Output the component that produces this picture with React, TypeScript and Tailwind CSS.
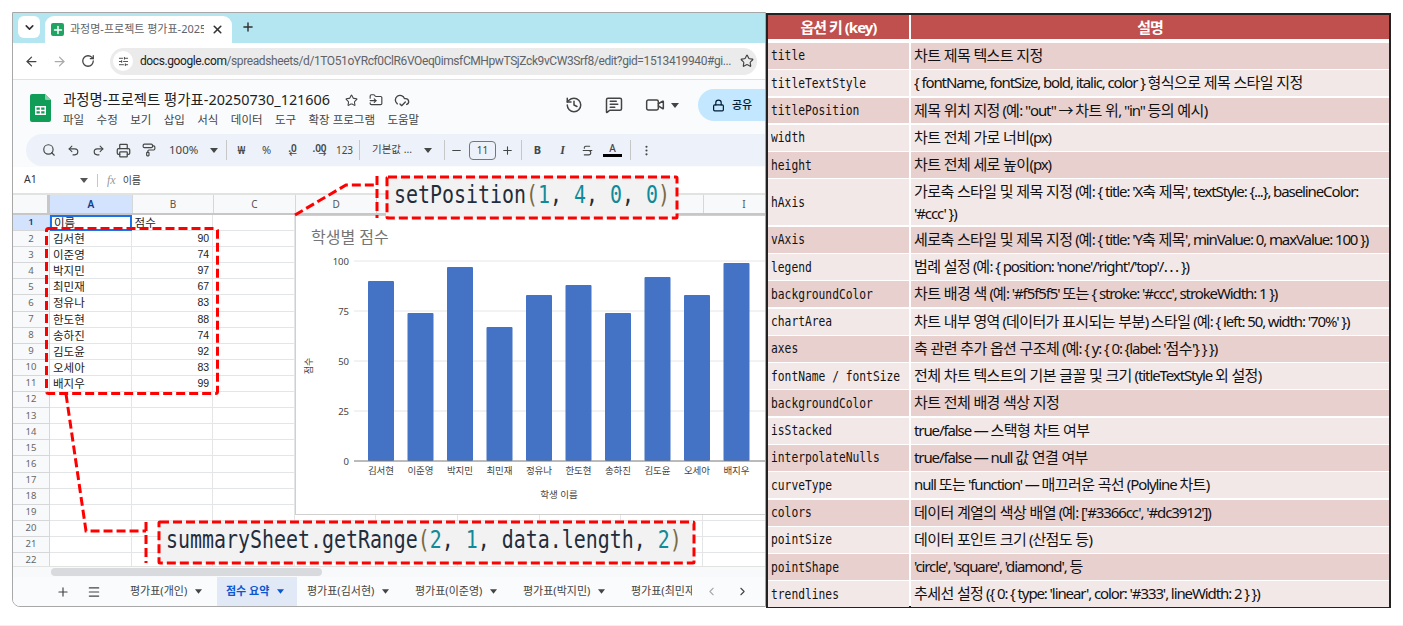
import React from 'react';
import { ArrowLeft, ArrowRight, RotateCw, Star, X, Plus, ChevronDown, ChevronLeft, ChevronRight, Search, Undo2, Redo2, Printer, PaintRoller, Minus, Strikethrough, EllipsisVertical, History, MessageSquareText, Video, Lock, FolderInput, CloudCheck, Menu, SlidersHorizontal } from 'lucide-react';

const sans = 'font-["Noto_Sans","Noto_Sans_CJK_KR",sans-serif]';

const students = [
  ['김서현', 90], ['이준영', 74], ['박지민', 97], ['최민재', 67], ['정유나', 83],
  ['한도현', 88], ['송하진', 74], ['김도윤', 92], ['오세아', 83], ['배지우', 99],
] as const;

const options = [
  ['title', '차트 제목 텍스트 지정'],
  ['titleTextStyle', '{ fontName, fontSize, bold, italic, color } 형식으로 제목 스타일 지정'],
  ['titlePosition', '제목 위치 지정 (예: "out" → 차트 위, "in" 등의 예시)'],
  ['width', '차트 전체 가로 너비(px)'],
  ['height', '차트 전체 세로 높이(px)'],
  ['hAxis', "가로축 스타일 및 제목 지정 (예: { title: 'X축 제목', textStyle: {...}, baselineColor:\n'#ccc' })"],
  ['vAxis', "세로축 스타일 및 제목 지정 (예: { title: 'Y축 제목', minValue: 0, maxValue: 100 })"],
  ['legend', "범례 설정 (예: { position: 'none'/'right'/'top'/⋯ })"],
  ['backgroundColor', "차트 배경 색 (예: '#f5f5f5' 또는 { stroke: '#ccc', strokeWidth: 1 })"],
  ['chartArea', "차트 내부 영역 (데이터가 표시되는 부분) 스타일 (예: { left: 50, width: '70%' })"],
  ['axes', "축 관련 추가 옵션 구조체 (예: { y: { 0: {label: '점수'} } })"],
  ['fontName / fontSize', '전체 차트 텍스트의 기본 글꼴 및 크기 (titleTextStyle 외 설정)'],
  ['backgroundColor', '차트 전체 배경 색상 지정'],
  ['isStacked', 'true/false — 스택형 차트 여부'],
  ['interpolateNulls', 'true/false — null 값 연결 여부'],
  ['curveType', "null 또는 'function' — 매끄러운 곡선 (Polyline 차트)"],
  ['colors', "데이터 계열의 색상 배열 (예: ['#3366cc', '#dc3912'])"],
  ['pointSize', '데이터 포인트 크기 (산점도 등)'],
  ['pointShape', "'circle', 'square', 'diamond', 등"],
  ['trendlines', "추세선 설정 ({ 0: { type: 'linear', color: '#333', lineWidth: 2 } })"],
];

const Caret = ({ className = '' }: { className?: string }) => (
  <svg viewBox="0 0 8 5" className={`w-2 h-[5px] shrink-0 ${className}`} fill="currentColor"><path d="M0 0h8L4 5z" /></svg>
);

const Sep = ({ className = '' }: { className?: string }) => <div className={`w-px h-5 bg-[#c7c7c7] shrink-0 ${className}`} />;

const Slot = ({ children, className = '', w = 'w-[25px]' }: { children: React.ReactNode; className?: string; w?: string }) => (
  <div className={`${w} h-6 shrink-0 flex items-center justify-center text-[#444746] ${className}`}>{children}</div>
);

const SheetsLogo = () => (
  <svg viewBox="0 0 21 28" className="w-[21px] h-7 shrink-0">
    <path d="M2 0h13l6 6v20a2 2 0 0 1-2 2H2a2 2 0 0 1-2-2V2a2 2 0 0 1 2-2z" fill="#0f9d58" />
    <path d="M15 0l6 6h-5a1 1 0 0 1-1-1z" fill="#87ceac" />
    <path d="M5 12h11v9H5zm1.5 1.5v2.3h3.3v-2.3zm4.7 0v2.3h3.3v-2.3zm-4.7 3.7v2.3h3.3v-2.3zm4.7 0v2.3h3.3v-2.3z" fill="#fff" fillRule="evenodd" />
  </svg>
);

const BrowserChrome = () => (
  <>
    <div className="h-[30px] shrink-0 bg-[#b3e6f1] flex items-end pl-[5px]">
      <div className="w-[22px] h-[22px] mb-[5px] bg-white rounded-md flex items-center justify-center text-[#333]">
        <ChevronDown size={13} strokeWidth={3} />
      </div>
      <div className="ml-[5px] w-[187px] h-[27px] bg-white rounded-t-[9px] flex items-center pl-[6px] pr-[7px]">
        <div className="w-[13px] h-[13px] bg-[#1fa463] rounded-[2px] flex items-center justify-center text-white shrink-0">
          <Plus size={12} strokeWidth={3} />
        </div>
        <span className={`ml-[6px] w-[134px] overflow-hidden whitespace-nowrap text-[11px] text-[#5f6368] ${sans}`}>과정명-프로젝트 평가표-20250730</span>
        <X size={13} strokeWidth={3} className="ml-[7px] text-[#333]" />
      </div>
      <Plus size={14} strokeWidth={2.5} className="ml-[9px] mb-[9px] text-[#333]" />
    </div>
    <div className="h-[37px] shrink-0 bg-white border-b border-[#dfe1e5] flex items-center pl-[11px]">
      <ArrowLeft size={15} strokeWidth={2} className="text-[#444]" />
      <ArrowRight size={15} strokeWidth={2} className="ml-[13px] text-[#aaa]" />
      <RotateCw size={14} strokeWidth={2.2} className="ml-[14px] text-[#444]" />
      <div className="ml-[15px] w-[647px] h-[27px] rounded-full bg-[#ebebeb] flex items-center pl-[3px] pr-[3px]">
        <div className="w-5 h-5 rounded-full bg-white flex items-center justify-center text-[#444] shrink-0">
          <SlidersHorizontal size={11} />
        </div>
        <span className="ml-[7px] w-[592px] whitespace-nowrap overflow-hidden text-[12px] tracking-[-0.4px] text-[#5f6368] font-['Roboto',sans-serif]">
          <span className="text-[#202124]">docs.google.com</span>/spreadsheets/d/1TO51oYRcf0ClR6VOeq0imsfCMHpwTSjZck9vCW3Srf8/edit?gid=1513419940#gi...
        </span>
        <Star size={14} className="ml-[8px] text-[#444] shrink-0" />
      </div>
    </div>
  </>
);

const SheetsHeader = () => (
  <div className="h-[54px] shrink-0 bg-[#f9fbfd] flex items-start pl-[17px] relative">
    <div className="mt-[14px]"><SheetsLogo /></div>
    <div className={`ml-[12px] mt-[9px] ${sans}`}>
      <div className="flex items-center h-[22px]">
        <span className="text-[14.4px] text-[#1f1f1f] whitespace-nowrap">과정명-프로젝트 평가표-20250730_121606</span>
        <Star size={13} className="ml-[15px] text-[#444]" />
        <FolderInput size={14} className="ml-[11px] text-[#444]" />
        <CloudCheck size={16} className="ml-[11px] text-[#444]" />
      </div>
      <div className="flex gap-[12.4px] text-[11.5px] text-[#444] whitespace-nowrap">
        <span>파일</span><span>수정</span><span>보기</span><span>삽입</span><span>서식</span><span>데이터</span><span>도구</span><span>확장 프로그램</span><span>도움말</span>
      </div>
    </div>
    <div className="ml-auto mt-[9px] flex items-center h-8 text-[#444]">
      <History size={18} />
      <MessageSquareText size={18} className="ml-[22px]" />
      <Video size={20} strokeWidth={1.8} className="ml-[22px]" />
      <Caret className="ml-[6px]" />
      <div className="ml-[19px] w-[67px] h-8 bg-[#c2e7ff] rounded-l-full flex items-center pl-[14px] text-[#001d35]">
        <Lock size={13} strokeWidth={2.2} />
        <span className={`ml-[7px] text-[11px] font-medium ${sans}`}>공유</span>
      </div>
    </div>
  </div>
);

const Toolbar = () => (
  <div className="h-[33px] shrink-0 bg-[#f9fbfd] pl-[13px]">
    <div className={`h-8 bg-[#edf2fa] rounded-l-full flex items-center pl-[10px] ${sans}`}>
      <Slot><Search size={14} /></Slot>
      <Slot><Undo2 size={13} /></Slot>
      <Slot><Redo2 size={13} /></Slot>
      <Slot><Printer size={15} /></Slot>
      <Slot><PaintRoller size={14} /></Slot>
      <span className="ml-[8px] w-[30px] text-[11.5px] text-[#444] shrink-0">100%</span>
      <Slot className="ml-[2px]"><Caret /></Slot>
      <Sep />
      <Slot className="ml-[2px] text-[11px] font-semibold">₩</Slot>
      <Slot className="text-[11px]">%</Slot>
      <Slot className="ml-px text-[10px] font-semibold leading-none"><span className="relative -top-[2px]">.0<span className="absolute -bottom-[5px] right-0 text-[8px] leading-none">←</span></span></Slot>
      <Slot className="ml-[2px] text-[10px] font-semibold leading-none"><span className="relative -top-[2px]">.00<span className="absolute -bottom-[5px] right-0 text-[8px] leading-none">→</span></span></Slot>
      <Slot className="text-[10px]">123</Slot>
      <Sep className="ml-[2px]" />
      <span className="ml-[12px] w-[44px] text-[10.5px] text-[#444] shrink-0 whitespace-nowrap">기본값 ...</span>
      <Slot w="w-[24px]"><Caret /></Slot>
      <Sep className="ml-[4px]" />
      <Slot w="w-[22px]"><Minus size={13} /></Slot>
      <div className="ml-[2px] w-[27px] h-[19px] border border-[#747775] rounded-[4px] flex items-center justify-center text-[10px] text-[#444] shrink-0">11</div>
      <Slot w="w-[22px]"><Plus size={13} /></Slot>
      <Sep className="ml-[3px]" />
      <Slot className="ml-[3px] text-[11px] font-bold">B</Slot>
      <Slot className="text-[12px] italic font-semibold font-['Liberation_Serif',serif]">I</Slot>
      <Slot><Strikethrough size={13} /></Slot>
      <Slot className="flex-col">
        <span className="text-[10px] leading-[11px] font-medium">A</span>
        <div className="w-[19px] h-[3px] bg-black" />
      </Slot>
      <Sep className="ml-[5px]" />
      <Slot className="ml-[3px]"><EllipsisVertical size={13} /></Slot>
    </div>
  </div>
);

const FormulaBar = () => (
  <div className={`h-[28px] shrink-0 bg-white border-b-2 border-[#e1e3e1] flex items-center pl-[11px] ${sans}`}>
    <span className="w-[56px] text-[10.5px] text-[#333]">A1</span>
    <Caret className="text-[#555]" />
    <div className="ml-[9px] w-px h-[13px] bg-[#c7c7c7]" />
    <span className="ml-[9px] text-[12px] italic text-[#999] font-['Liberation_Serif',serif]">fx</span>
    <span className="ml-[7px] text-[10px] text-[#444]">이름</span>
  </div>
);

const colWidth = 'w-[81.6px] shrink-0';
const columnLetters = ['B', 'C', 'D', 'E', 'F', 'G', 'H', 'I'];

const Chart = () => {
  const left = 73; // first bar, relative to the chart
  const pitch = 39.5;
  const base = 246;
  return (
    <div className="absolute left-[282px] top-0 w-[472px] h-[300px] bg-white border border-[#d0d0d0]">
      <svg width="470" height="298" className={sans}>
        <text x="15" y="27" fontSize="16" fill="#757575">학생별 점수</text>
        {[100, 75, 50, 25].map((v, i) => (
          <g key={v}>
            <line x1="58" x2="470" y1={45 + i * 50} y2={45 + i * 50} stroke="#e6e6e6" strokeWidth="1" />
            <text x="53" y={49 + i * 50} fontSize="9.5" textAnchor="end" fill="#444">{v}</text>
          </g>
        ))}
        <text x="53" y="249" fontSize="9.5" textAnchor="end" fill="#444">0</text>
        {students.map(([name, score], i) => (
          <g key={name}>
            <rect x={left - 1 + i * pitch} y={base - 1 - score * 2} width="26" height={score * 2} rx="1" fill="#4472c4" />
            <text x={left + 12 + i * pitch} y="258" fontSize="9.5" textAnchor="middle" fill="#444">{name}</text>
          </g>
        ))}
        <line x1="58" x2="470" y1={base - 1} y2={base - 1} stroke="#777" strokeWidth="1" />
        <text x="263" y="282" fontSize="9.5" textAnchor="middle" fill="#444">학생 이름</text>
        <text transform="translate(16 150) rotate(-90)" fontSize="9" textAnchor="middle" fill="#444">점수</text>
      </svg>
    </div>
  );
};

const Grid = () => {
  const rows = Array.from({ length: 22 }, (_, i) => i + 1);
  return (
    <div className={`h-[371px] shrink-0 bg-white overflow-hidden ${sans}`}>
      <div className="flex h-[20px] bg-[#f8f9fa] border-b-2 border-[#c7c7c7] text-[10px] text-[#555]">
        <div className="w-[37px] shrink-0 border-r-[3px] border-[#c7c7c7]" />
        <div className={`${colWidth} bg-[#d3e3fd] font-semibold text-[#0b3a8a] flex items-center justify-center`}>A</div>
        {columnLetters.map(c => (
          <div key={c} className={`${colWidth} border-l border-[#d5d7d9] flex items-center justify-center`}>{c}</div>
        ))}
      </div>
      <div className="relative">
        {rows.map(r => {
          const student = students[r - 2];
          return (
            <div key={r} className="flex h-[16.1px] text-[11.5px] text-[#222]">
              <div className={`w-[37px] shrink-0 border-r border-b border-[#d5d7d9] flex items-center justify-center text-[9.5px] ${r === 1 ? 'bg-[#d3e3fd] font-semibold text-[#0b3a8a]' : 'bg-[#f8f9fa] text-[#666]'}`}>{r}</div>
              {r === 1 ? (
                <div className={`${colWidth} border-2 border-[#1a73e8] pl-[2px] leading-[12px]`}>이름</div>
              ) : (
                <div className={`${colWidth} border-r border-b border-[#e4e5e6] pl-[3px] leading-[15px]`}>{student?.[0]}</div>
              )}
              {r === 1 ? (
                <div className={`${colWidth} border-r border-b border-[#e4e5e6] pl-[3px] leading-[15px]`}>점수</div>
              ) : (
                <div className={`${colWidth} border-r border-b border-[#e4e5e6] pr-[3px] leading-[15px] text-right text-[10.5px] font-['Liberation_Sans',sans-serif]`}>{student?.[1]}</div>
              )}
              {[0, 1, 2, 3, 4, 5, 6].map(c => <div key={c} className={`${colWidth} border-r border-b border-[#e4e5e6]`} />)}
            </div>
          );
        })}
        <Chart />
      </div>
    </div>
  );
};

const SheetTab = ({ label, width, active, last }: { label: string; width: string; active?: boolean; last?: boolean }) => (
  <div className={`h-full flex items-center shrink-0 ${width} ${active ? 'bg-[#e1e9f7] text-[#0b57d0] font-semibold pl-[9px]' : 'text-[#444] pl-[10px]'}`}>
    <span className={`whitespace-nowrap ${last ? 'w-[61px] overflow-hidden' : ''}`}>{label}</span>
    {!last && <Caret className="ml-[8px] w-[7px]" />}
  </div>
);

const SheetTabs = () => (
  <div className={`h-[29px] shrink-0 bg-[#f9fbfd] flex items-center text-[11px] text-[#444] ${sans}`}>
    <Plus size={14} className="ml-[43px] shrink-0" />
    <Menu size={14} className="ml-[17px] shrink-0" />
    <div className="ml-[19px] flex items-center h-full shrink-0">
      <SheetTab label="평가표(개인)" width="w-[97px]" />
      <SheetTab label="점수 요약" width="w-[80px]" active />
      <SheetTab label="평가표(김서현)" width="w-[108px]" />
      <SheetTab label="평가표(이준영)" width="w-[108px]" />
      <SheetTab label="평가표(박지민)" width="w-[108px]" />
      <SheetTab label="평가표(최민재)" width="w-[71px]" last />
    </div>
    <ChevronLeft size={13} className="ml-[13px] text-[#aaa] shrink-0" />
    <ChevronRight size={13} className="ml-[18px] shrink-0" />
  </div>
);

// hangul sits wide, latin is squeezed hard in the reference table
const Desc = ({ text }: { text: string }) => (
  <>
    {text.split(/([가-힣]+(?: [가-힣]+)*)/).map((part, i) => (
      <span key={i} className={i % 2 ? 'tracking-[-0.6px]' : 'tracking-[-1.1px]'}>{part}</span>
    ))}
  </>
);

const OptionTable = () => (
  <div className={`w-[625px] h-[595px] mt-px border-2 border-[#222] bg-white flex flex-col ${sans}`}>
    <div className="h-[24px] shrink-0 grid grid-cols-[141px_1fr] gap-x-[2px] bg-white text-white text-[15px] font-bold text-center leading-[24px] mb-[3px]">
      <div className="bg-[#c0504d] tracking-[-1px]">옵션 키 (key)</div>
      <div className="bg-[#c0504d] tracking-[-1px]">설명</div>
    </div>
    <div className="flex flex-col gap-y-[1.4px] pt-[1px]">
      {options.map(([key, desc], i) => (
        <div key={i} className={`grid grid-cols-[141px_1fr] gap-x-[2px] ${key === 'hAxis' ? 'h-[46px]' : 'h-[25.9px]'}`}>
          <div className={`flex items-center pl-[3px] overflow-hidden whitespace-nowrap ${i % 2 ? 'bg-[#f3e8e8]' : 'bg-[#e8d0cf]'}`}>
            <span className="inline-block origin-left scale-x-[0.806] text-[14px] text-[#111] font-['DejaVu_Sans_Mono',monospace]">{key}</span>
          </div>
          <div className={`pl-[3px] whitespace-pre-line text-[15px] leading-[22px] text-[#111] pt-px ${i % 2 ? 'bg-[#f3e8e8]' : 'bg-[#e8d0cf]'}`}>
            <Desc text={desc} />
          </div>
        </div>
      ))}
    </div>
  </div>
);

const CodeBox = ({ className, children }: { className: string; children: React.ReactNode }) => (
  <div className={`absolute bg-[#f2f2f2] flex items-center overflow-hidden ${className}`}>
    <span className="inline-block origin-left scale-x-[0.83] -mt-[4px] whitespace-nowrap text-[24px] text-[#1f2d3d] font-['DejaVu_Sans_Mono',monospace]">{children}</span>
  </div>
);

const Num = ({ children }: { children: React.ReactNode }) => <span className="text-[#0f8a99]">{children}</span>;
const Paren = ({ children }: { children: React.ReactNode }) => <span className="text-[#7a6a45]">{children}</span>;

// red call-outs that lie over the sheet
const Annotations = () => (
  <>
    <CodeBox className="left-[386px] top-[176px] w-[291px] h-[42px] pl-[8px]">
      setPosition<Paren>(</Paren><Num>1</Num>, <Num>4</Num>, <Num>0</Num>, <Num>0</Num><Paren>)</Paren>
    </CodeBox>
    <CodeBox className="left-[158px] top-[521px] w-[536px] h-[42px] pl-[8px]">
      summarySheet.getRange<Paren>(</Paren><Num>2</Num>, <Num>1</Num>, data.length, <Num>2</Num><Paren>)</Paren>
    </CodeBox>
    <svg width="1403" height="626" className="absolute inset-0 pointer-events-none" fill="none" stroke="#f00" strokeWidth="3" strokeDasharray="9 4">
      <rect x="46.5" y="228.5" width="171" height="165" rx="2" />
      <rect x="387" y="177" width="290" height="41" rx="1" />
      <rect x="159" y="522" width="535" height="41" rx="1" />
      <path d="M66 394 L86 531 H146" />
      <path d="M146 522 V563" />
      <path d="M295 215 L346 185 H377" />
      <path d="M377 176 V218" />
    </svg>
  </>
);

export default function App() {
  return (
    <div className="relative w-[1403px] h-[626px] bg-white overflow-hidden flex flex-col">
      <div className="flex items-start pt-3 pl-3">
        <div className="w-[754px] h-[595px] border border-[#a8a8a8] rounded-bl-lg overflow-hidden flex flex-col shrink-0">
          <BrowserChrome />
          <SheetsHeader />
          <Toolbar />
          <FormulaBar />
          <Grid />
          <div className="h-[11px] shrink-0 bg-[#f8f9fa] border-t border-[#e1e3e1] pl-[38px] pt-[1px]">
            <div className="w-[271px] h-[8px] rounded-full bg-[#d9dade]" />
          </div>
          <SheetTabs />
        </div>
        <OptionTable />
      </div>
      <div className="mt-auto h-px bg-[#f0f0f0]" />
      <Annotations />
    </div>
  );
}
